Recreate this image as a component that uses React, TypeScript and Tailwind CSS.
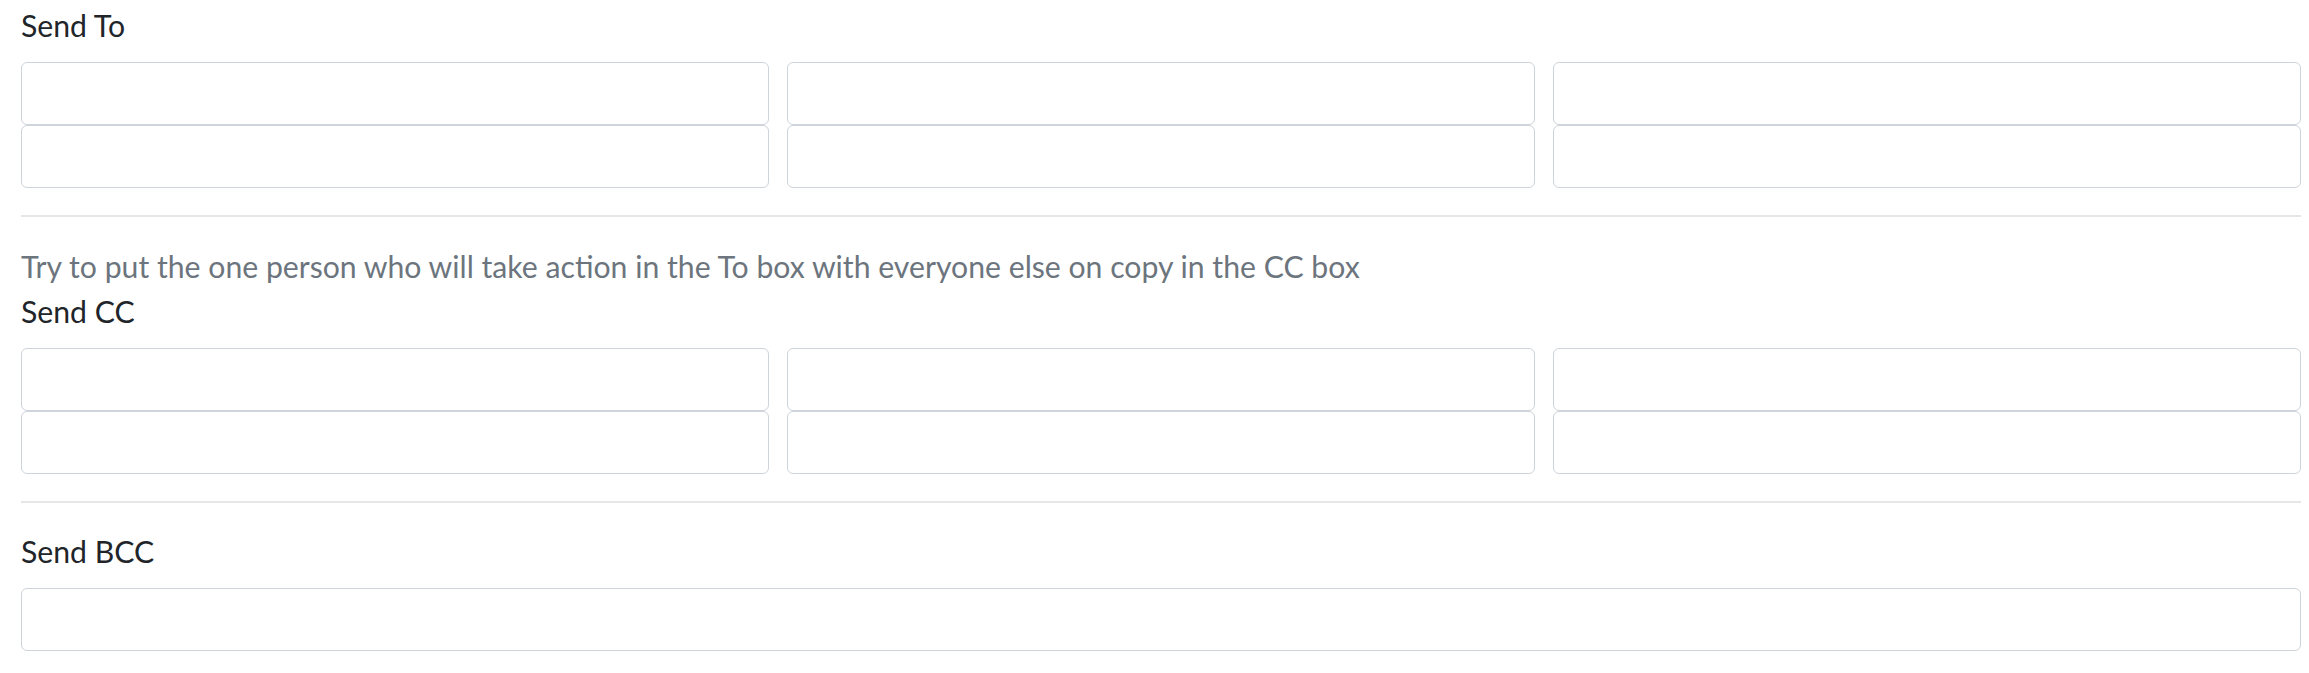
import React from 'react'

const font = { fontFamily: 'Lato, "Open Sans", sans-serif' }

function EmailGrid({ name }: { name: string }) {
  const boxes = Array.from({ length: 6 }, (_, i) => i)
  return (
    <div className="grid grid-cols-3 gap-x-[18px] mt-[14px]">
      {boxes.map((i) => (
        <input
          key={i}
          type="email"
          name={`${name}-${i}`}
          className="h-[63px] w-full rounded-[6px] border border-[#ced4da] bg-white px-3 outline-none"
        />
      ))}
    </div>
  )
}

export default function App() {
  return (
    <div className="min-h-[673px] bg-white pl-[21px] pr-[8px] pt-[3px] text-[30.2px] leading-[45px] text-[#212529]" style={font}>
      <label className="block">Send To</label>
      <EmailGrid name="to" />

      <hr className="mt-[27px] border-0 border-t-2 border-[#e6e6e6]" />

      <p className="mt-[27px] text-[#6c757d]">
        Try to put the one person who will take action in the To box with everyone else on copy in the CC box
      </p>
      <label className="block">Send CC</label>
      <EmailGrid name="cc" />

      <hr className="mt-[27px] border-0 border-t-2 border-[#e6e6e6]" />

      <label className="mt-[26px] block">Send BCC</label>
      <input
        type="email"
        name="bcc"
        className="mt-[14px] block h-[63px] w-full rounded-[6px] border border-[#ced4da] bg-white px-3 outline-none"
      />
    </div>
  )
}
